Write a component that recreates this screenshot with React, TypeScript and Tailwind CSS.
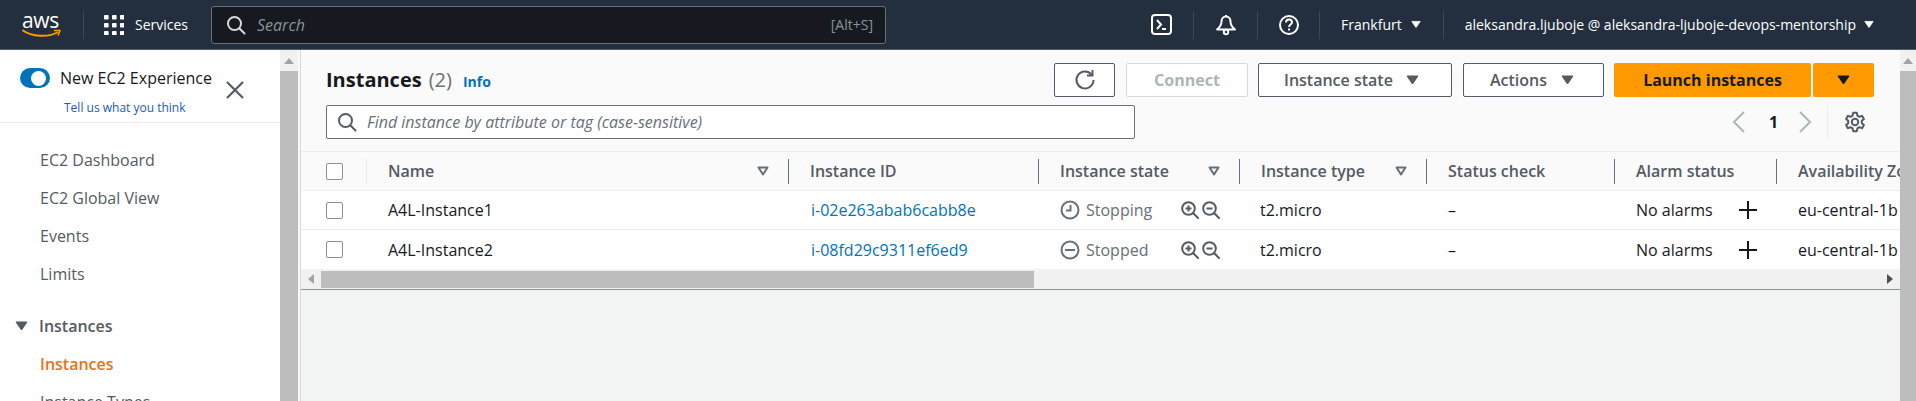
import React from "react";

const Caret = ({ w = 13, h = 10, color = "#545b64" }: { w?: number; h?: number; color?: string }) => (
  <svg width={w} height={h} viewBox="0 0 13 10" className="shrink-0">
    <path d="M1 1h11L6.5 9z" fill={color} stroke={color} strokeWidth="1" strokeLinejoin="round" />
  </svg>
);

const FilterCaret = () => (
  <svg width="12" height="10" viewBox="0 0 12 10" className="shrink-0">
    <path d="M1.5 1.5h9L6 8.5z" fill="none" stroke="#687078" strokeWidth="2" strokeLinejoin="round" />
  </svg>
);

const SearchIcon = ({ color }: { color: string }) => (
  <svg width="20" height="20" viewBox="0 0 20 20" fill="none" stroke={color} strokeWidth="2">
    <circle cx="8.5" cy="8.5" r="6.5" />
    <path d="M13.5 13.5l5 5" strokeLinecap="round" />
  </svg>
);

const SortSep = ({ light = false }: { light?: boolean }) => (
  <div className={light ? "w-px h-[25px] bg-[#eaeded] shrink-0" : "w-px h-[25px] bg-[#687078] shrink-0"} />
);

const HeaderSep = () => <div className="w-px h-[28px] bg-[#414750] shrink-0" />;

const ScrollUp = () => (
  <div className="h-[21px] flex items-center justify-center shrink-0">
    <svg width="10" height="6" viewBox="0 0 10 6">
      <path d="M5 0l5 6H0z" fill="#a3a3a3" />
    </svg>
  </div>
);

const Checkbox = () => (
  <div className="w-[17px] h-[17px] rounded-[2px] border border-[#879596] bg-white shrink-0" />
);

const ClockIcon = () => (
  <svg width="20" height="20" viewBox="0 0 20 20" fill="none" stroke="#687078" strokeWidth="2" className="shrink-0">
    <circle cx="10" cy="10" r="8.5" />
    <path d="M10.5 5v5.5H6" />
  </svg>
);

const MinusIcon = () => (
  <svg width="20" height="20" viewBox="0 0 20 20" fill="none" stroke="#687078" strokeWidth="2" className="shrink-0">
    <circle cx="10" cy="10" r="8.5" />
    <path d="M5 10h10" />
  </svg>
);

const ZoomIcon = ({ plus }: { plus: boolean }) => (
  <svg width="18" height="18" viewBox="0 0 18 18" fill="none" stroke="#545b64" strokeWidth="2" className="shrink-0">
    <circle cx="7.5" cy="7.5" r="6.3" />
    <path d="M12 12l5 5" strokeLinecap="round" />
    <path d={plus ? "M4.5 7.5h6M7.5 4.5v6" : "M4.5 7.5h6"} />
  </svg>
);

const PlusIcon = () => (
  <svg width="18" height="18" viewBox="0 0 18 18" stroke="#16191f" strokeWidth="2" className="shrink-0">
    <path d="M0 9h18M9 0v18" />
  </svg>
);

const COLS = "grid grid-cols-[66px_422px_250px_201px_187px_188px_162px_123px]";

const Th = ({ label, filter, last }: { label: string; filter?: boolean; last?: boolean }) => (
  <div className="flex items-center h-full overflow-hidden">
    <div className="pl-[21px] flex-1 whitespace-nowrap overflow-hidden font-semibold text-[#545b64]">{label}</div>
    {filter && <div className="mr-[19px]"><FilterCaret /></div>}
    {!last && <SortSep />}
  </div>
);

const Row = ({
  name,
  id,
  state,
  border,
}: {
  name: string;
  id: string;
  state: string;
  border: boolean;
}) => (
  <div className={`${COLS} h-[39px] bg-white items-center ${border ? "border-b border-[#eaeded]" : ""}`}>
    <div className="pl-[25px]"><Checkbox /></div>
    <div className="pl-[21px] text-[#16191f]">{name}</div>
    <div className="pl-[22px] text-[#0073bb]">{id}</div>
    <div className="pl-[21px] flex items-center">
      {state === "Stopping" ? <ClockIcon /> : <MinusIcon />}
      <span className="ml-[6px] w-[95px] text-[#687078]">{state}</span>
      <div className="flex gap-[3px]">
        <ZoomIcon plus />
        <ZoomIcon plus={false} />
      </div>
    </div>
    <div className="pl-[20px] text-[#16191f]">t2.micro</div>
    <div className="pl-[21px] text-[#16191f]">–</div>
    <div className="pl-[21px] flex items-center text-[#16191f]">
      <span className="w-[103px]">No alarms</span>
      <PlusIcon />
    </div>
    <div className="pl-[21px] text-[#16191f] whitespace-nowrap overflow-hidden">eu-central-1b</div>
  </div>
);

const navText = "h-[38px] flex items-center pl-[40px]";

export default function App() {
  return (
    <div className="w-[1916px] h-[401px] overflow-hidden flex flex-col bg-white text-[16px] leading-[20px] font-['Open_Sans','Noto_Sans',sans-serif]">
      <header className="h-[50px] shrink-0 bg-[#232f3e] border-b border-[#545b64] flex items-center text-white text-[14px]">
        <div className="w-[83px] pl-[22px] shrink-0 flex flex-col items-start">
          <span className="text-[21px] leading-[17px] h-[17px] tracking-[-0.3px] font-['Open_Sans',sans-serif]">aws</span>
          <svg width="40" height="9" viewBox="0 0 40 9" fill="none" className="block">
            <path d="M1 1.5C10 8 26 8.5 35 3.5" stroke="#ff9900" strokeWidth="2" strokeLinecap="round" />
            <path d="M32 1.5h6l-2 5" stroke="#ff9900" strokeWidth="1.6" fill="none" strokeLinejoin="round" />
          </svg>
        </div>
        <HeaderSep />
        <svg width="20" height="20" viewBox="0 0 20 20" className="ml-[20px] shrink-0" fill="#fff">
          {[0, 8, 16].flatMap((y) =>
            [0, 8, 16].map((x) => <rect key={`${x}-${y}`} x={x} y={y} width="4.6" height="4.6" rx="0.8" />)
          )}
        </svg>
        <span className="ml-[11px] w-[76px] shrink-0 text-[14px]">Services</span>
        <div className="w-[675px] h-[38px] shrink-0 bg-[#16191f] border border-[#687078] rounded-[3px] flex items-center pl-[14px] pr-[12px]">
          <SearchIcon color="#d5dbdb" />
          <span className="ml-[11px] italic text-[16px] text-[#879596]">Search</span>
          <span className="ml-auto text-[14px] text-[#879596]">[Alt+S]</span>
        </div>
        <svg width="21" height="21" viewBox="0 0 21 21" fill="none" stroke="#fff" strokeWidth="2" className="ml-[265px] shrink-0">
          <rect x="1" y="1" width="19" height="19" rx="3" />
          <path d="M6 6l4 4.5-4 4.5M11 15h4" />
        </svg>
        <div className="ml-[21px]"><HeaderSep /></div>
        <svg width="22" height="22" viewBox="0 0 22 22" fill="none" stroke="#fff" strokeWidth="2" className="ml-[21px] shrink-0">
          <path d="M11 2.5c-3 0-4.5 2.5-4.5 5 0 4-2 6-4.5 8h18c-2.5-2-4.500-4-4.500-8 0-2.500-1.500-5-4.500-5z" strokeLinejoin="round" />
          <path d="M11 1v2" />
          <circle cx="11" cy="18" r="2.200" />
        </svg>
        <div className="ml-[20px]"><HeaderSep /></div>
        <svg width="20" height="20" viewBox="0 0 20 20" fill="none" stroke="#fff" strokeWidth="2" className="ml-[21px] shrink-0">
          <circle cx="10" cy="10" r="9" />
          <path d="M7 7.500c0-1.800 1.400-3 3-3s3 1.200 3 2.800c0 2.200-3 2.300-3 4.700" />
          <path d="M10 13.500v2" />
        </svg>
        <div className="ml-[20px]"><HeaderSep /></div>
        <span className="ml-[21px] text-[14px]">Frankfurt</span>
        <div className="ml-[9px]"><Caret w={10} h={9} color="#fff" /></div>
        <div className="ml-[22px]"><HeaderSep /></div>
        <span className="ml-[21px] text-[14px] whitespace-nowrap">aleksandra.ljuboje @ aleksandra-ljuboje-devops-mentorship</span>
        <div className="ml-[8px]"><Caret w={10} h={9} color="#fff" /></div>
      </header>

      <div className="flex flex-1 min-h-0">
        <aside className="w-[280px] shrink-0 bg-white overflow-hidden">
          <div className="h-[73px] border-b border-[#eaeded] flex items-start pl-[20px] pt-[18px]">
            <div className="flex flex-col">
              <div className="flex items-center h-[20px]">
                <div className="w-[30px] h-[20px] rounded-full bg-[#0073bb] flex items-center justify-end pr-[4px]">
                  <div className="w-[15px] h-[15px] rounded-full bg-white" />
                </div>
                <span className="ml-[10px] text-[#16191f] whitespace-nowrap">New EC2 Experience</span>
              </div>
              <span className="ml-[44px] mt-[12px] text-[12px] leading-[16px] text-[#1a5bc4] whitespace-nowrap">Tell us what you think</span>
            </div>
            <svg width="18" height="18" viewBox="0 0 18 18" stroke="#545b64" strokeWidth="2.200" className="ml-[14px] mt-[13px] shrink-0">
              <path d="M1 1l16 16M17 1L1 17" />
            </svg>
          </div>
          <nav className="pt-[18px] text-[#545b64]">
            <div className={navText}>EC2 Dashboard</div>
            <div className={navText}>EC2 Global View</div>
            <div className={navText}>Events</div>
            <div className={navText}>Limits</div>
            <div className="h-[38px] mt-[14px] flex items-center pl-[15px] font-semibold">
              <Caret />
              <span className="ml-[11px]">Instances</span>
            </div>
            <div className={`${navText} font-semibold text-[#ec7211]`}>Instances</div>
            <div className={navText}>Instance Types</div>
          </nav>
        </aside>

        <div className="w-[18px] shrink-0 flex flex-col bg-[#f1f1f1]">
          <ScrollUp />
          <div className="flex-1 bg-[#bdbdbd]" />
        </div>

        <div className="w-[2px] shrink-0 bg-[#f8f8f8]" />

        <main className="w-[1600px] shrink-0 border-l border-[#d5dbdb] flex flex-col bg-[#f2f3f3]">
          <div className="bg-[#fafafa] h-[102px] pl-[25px] pr-[26px] pt-[13px] border-b border-[#eaeded] shrink-0">
            <div className="flex items-center h-[34px]">
              <h1 className="text-[20px] font-bold text-[#16191f]">Instances</h1>
              <span className="ml-[7px] text-[20px] text-[#687078]">(2)</span>
              <span className="ml-[11px] mt-[3px] text-[14px] font-bold text-[#0073bb]">Info</span>
              <button className="ml-auto w-[61px] h-[34px] bg-white border border-[#545b64] rounded-[2px] flex items-center justify-center">
                <svg width="22" height="22" viewBox="0 0 22 22" fill="none" stroke="#545b64" strokeWidth="2">
                  <path d="M17.500 5.500A8.500 8.500 0 1 0 19.500 11" />
                  <path d="M18.500 1v5.500H13" />
                </svg>
              </button>
              <button className="ml-[11px] w-[122px] h-[34px] bg-white border border-[#d5dbdb] rounded-[2px] text-[#aab7b8] font-bold">Connect</button>
              <button className="ml-[10px] w-[194px] h-[34px] bg-white border border-[#545b64] rounded-[2px] font-semibold text-[#545b64] flex items-center pl-[25px]">
                <span>Instance state</span>
                <span className="ml-[13px]"><Caret /></span>
              </button>
              <button className="ml-[11px] w-[141px] h-[34px] bg-white border border-[#545b64] rounded-[2px] font-semibold text-[#545b64] flex items-center pl-[26px]">
                <span>Actions</span>
                <span className="ml-[14px]"><Caret /></span>
              </button>
              <button className="ml-[10px] w-[197px] h-[34px] bg-[#ff9900] rounded-[2px] font-bold text-[#16191f] flex items-center justify-center">Launch instances</button>
              <button className="ml-[2px] w-[61px] h-[34px] bg-[#ff9900] rounded-[2px] flex items-center justify-center">
                <Caret color="#16191f" />
              </button>
            </div>
            <div className="flex items-center h-[34px] mt-[8px]">
              <div className="w-[809px] h-[34px] bg-white border border-[#687078] rounded-[2px] flex items-center pl-[10px]">
                <SearchIcon color="#545b64" />
                <span className="ml-[10px] italic text-[#687078] whitespace-nowrap">Find instance by attribute or tag (case-sensitive)</span>
              </div>
              <svg width="14" height="22" viewBox="0 0 14 22" fill="none" stroke="#aab7b8" strokeWidth="2" className="ml-[597px] shrink-0">
                <path d="M12 1L2 11l10 10" />
              </svg>
              <span className="ml-[23px] w-[18px] font-bold text-[#16191f]">1</span>
              <svg width="14" height="22" viewBox="0 0 14 22" fill="none" stroke="#aab7b8" strokeWidth="2" className="ml-[11px] shrink-0">
                <path d="M2 1l10 10L2 21" />
              </svg>
              <div className="ml-[15px] w-px h-[34px] bg-[#eaeded]" />
              <svg width="22" height="22" viewBox="0 0 24 24" fill="none" stroke="#545b64" strokeWidth="2.200" strokeLinejoin="round" className="ml-[16px] shrink-0">
                <path d="M10 2h4l.6 3 2.200 1.300 2.900-1 2 3.400-2.300 2v2.600l2.300 2-2 3.400-2.900-1L14.600 19l-.6 3h-4l-.6-3-2.200-1.300-2.900 1-2-3.400 2.300-2v-2.600l-2.300-2 2-3.400 2.900 1L9.400 5z" />
                <circle cx="12" cy="12" r="3.500" />
              </svg>
            </div>
          </div>

          <div className="bg-[#fafafa] border-b border-[#eaeded] h-[39px] shrink-0">
            <div className={`${COLS} h-full items-center`}>
              <div className="flex items-center h-full pl-[25px]">
                <Checkbox />
                <div className="ml-auto"><SortSep light /></div>
              </div>
              <Th label="Name" filter />
              <Th label="Instance ID" />
              <Th label="Instance state" filter />
              <Th label="Instance type" filter />
              <Th label="Status check" />
              <Th label="Alarm status" />
              <Th label="Availability Zone" last />
            </div>
          </div>

          <Row name="A4L-Instance1" id="i-02e263abab6cabb8e" state="Stopping" border />
          <Row name="A4L-Instance2" id="i-08fd29c9311ef6ed9" state="Stopped" border={false} />

          <div className="h-[21px] shrink-0 bg-[#f1f1f1] border-b border-[#879596] flex items-center">
            <div className="w-[20px] flex justify-center">
              <svg width="6" height="10" viewBox="0 0 6 10"><path d="M6 0v10L0 5z" fill="#a3a3a3" /></svg>
            </div>
            <div className="w-[713px] h-[17px] bg-[#bdbdbd]" />
            <div className="ml-auto w-[20px] flex justify-center">
              <svg width="6" height="10" viewBox="0 0 6 10"><path d="M0 0v10l6-5z" fill="#505050" /></svg>
            </div>
          </div>
          <div className="flex-1" />
        </main>

        <div className="flex-1 flex flex-col bg-[#f1f1f1]">
          <ScrollUp />
          <div className="flex-1 bg-[#bdbdbd]" />
        </div>
      </div>
    </div>
  );
}
